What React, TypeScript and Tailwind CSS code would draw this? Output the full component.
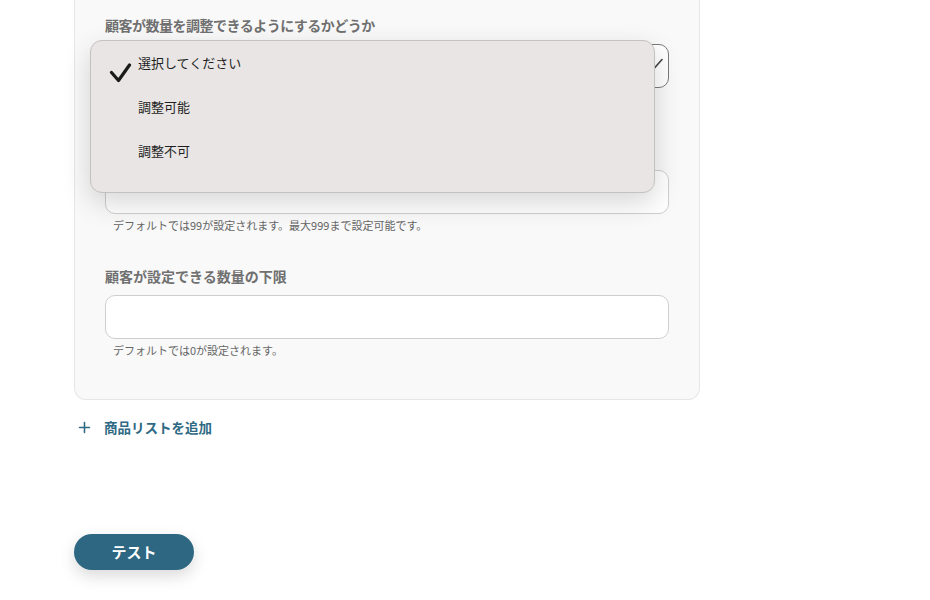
import { Plus } from "lucide-react";

const font = { fontFamily: '"Noto Sans CJK JP", "Noto Sans", sans-serif' };

const Field = ({
  label,
  help,
  focused,
  tight,
  className = "",
}: {
  label: string;
  help?: string;
  focused?: boolean;
  tight?: boolean;
  className?: string;
}) => (
  <div className={className}>
    <div className={`text-[14px] font-bold leading-[20px] text-[#707070] ${tight ? "tracking-[-0.5px]" : ""}`}>{label}</div>
    <div
      className={`relative mt-[9px] h-[44px] w-full rounded-[10px] border bg-white ${
        focused ? "border-[#7a7a7a]" : "border-[#cfcfcf]"
      }`}
    >
      {focused && (
        <svg
          className="absolute right-[5px] top-[13px]"
          width="18"
          height="12"
          viewBox="0 0 18 12"
          fill="none"
          stroke="#444"
          strokeWidth="1.6"
          strokeLinecap="round"
        >
          <path d="M1 1.5 9 10.5 17 1.5" />
        </svg>
      )}
    </div>
    {help && <div className="mt-[3px] pl-2 text-[11px] leading-[16px] text-[#666]">{help}</div>}
  </div>
);

const options = ["選択してください", "調整可能", "調整不可"];

export default function App() {
  return (
    <div className="min-h-[600px] w-full bg-white" style={font}>
      <div className="pl-[74px]">
        <div className="relative w-[626px] rounded-b-[12px] border-x border-b border-[#e6e6e6] bg-[#f9f9f9] px-[30px] pb-[41px] pt-[15px]">
          <Field label="顧客が数量を調整できるようにするかどうか" focused tight />
          <Field label="顧客が設定できる数量の上限" help="デフォルトでは99が設定されます。最大999まで設定可能です。" className="mt-[53px]" />
          <Field label="顧客が設定できる数量の下限" help="デフォルトでは0が設定されます。" className="mt-[33px]" />

          <div className="absolute left-[15px] top-[40px] h-[153px] w-[565px] rounded-[12px] border border-[#c4c2c1] bg-[#e8e5e4] shadow-[0_10px_28px_rgba(0,0,0,0.16)]">
            {options.map((o, i) => (
              <div key={o} className="relative flex h-[44px] items-center pl-[47px] text-[13px] text-[#1f1f1f]">
                {i === 0 && (
                  <svg
                    className="absolute left-[18px] top-[22px]"
                    width="23"
                    height="20"
                    viewBox="0 0 23 20"
                    fill="none"
                    stroke="#1a1a1a"
                    strokeWidth="3.2"
                    strokeLinecap="round"
                    strokeLinejoin="round"
                  >
                    <path d="M2.5 9.5 9.5 17.5 20.5 2" />
                  </svg>
                )}
                {o}
              </div>
            ))}
          </div>
        </div>

        <button className="mt-[17px] flex items-center text-[13.5px] font-bold leading-[20px] text-[#2f6a84]">
          <Plus className="ml-[2px] h-[17px] w-[17px]" strokeWidth={2.2} />
          <span className="ml-[11px]">商品リストを追加</span>
        </button>

        <button className="mt-[97px] h-[36px] w-[120px] rounded-full bg-[#2d6781] text-[15px] font-bold text-white shadow-[0_6px_16px_rgba(0,0,0,0.15)]">
          テスト
        </button>
      </div>
    </div>
  );
}
